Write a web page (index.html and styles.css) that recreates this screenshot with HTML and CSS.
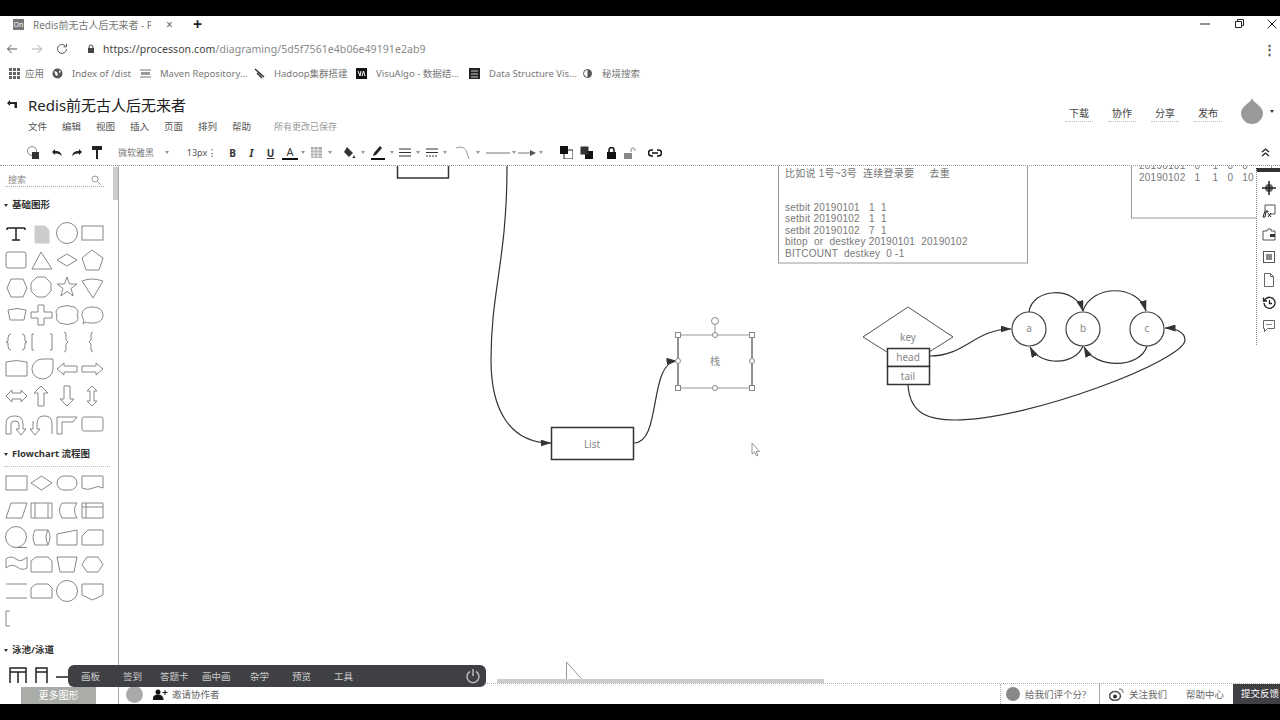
FILE: index.html
```html
<!DOCTYPE html>
<html lang="zh-CN">
<head>
    <meta charset="UTF-8">
    <title>Redis前无古人后无来者 - ProcessOn</title>
    <link rel="stylesheet" href="styles.css">
</head>
<body>
    <div class="black-bar"></div>

    <!-- browser chrome -->
    <div class="tab-row">
        <span class="favicon">On</span>
        <span class="tab-title">Redis前无古人后无来者 - Proc</span>
        <span class="tab-close">×</span>
        <span class="tab-new">+</span>
        <span class="window-btns">
            <svg width="12" height="12" viewBox="0 0 12 12"><path d="M1 6h10" stroke="#222" fill="none"/></svg>
            <svg width="12" height="12" viewBox="0 0 12 12"><path d="M2.5 3.5h6v6h-6zM4.500 3.500V1.500h6v6h-2" stroke="#222" fill="none"/></svg>
            <svg width="12" height="12" viewBox="0 0 12 12"><path d="M1.500 1.500l9 9M10.500 1.500l-9 9" stroke="#222" fill="none"/></svg>
        </span>
    </div>
    <div class="address-row">
        <svg class="nav-icon" width="12" height="12" viewBox="0 0 12 12"><path d="M11 6H1.500M5.500 2L1.500 6l4 4" stroke="#555" fill="none"/></svg>
        <svg class="nav-icon" width="12" height="12" viewBox="0 0 12 12"><path d="M1 6h9.500M6.500 2l4 4-4 4" stroke="#aaa" fill="none"/></svg>
        <svg class="nav-icon" width="12" height="12" viewBox="0 0 12 12"><path d="M10.500 6a4.500 4.500 0 1 1-1.300-3.200M10.500 .8v3h-3" stroke="#555" fill="none"/></svg>
        <svg class="lock" width="8" height="10" viewBox="0 0 8 10"><path d="M2 4V3a2 2 0 0 1 4 0v1" stroke="#444" fill="none"/><rect x="1" y="4" width="6" height="5" fill="#444"/></svg>
        <span class="url"><b>https://processon.com</b>/diagraming/5d5f7561e4b06e49191e2ab9</span>
        <span class="kebab">⋮</span>
    </div>
    <div class="bookmarks">
        <span class="bm apps"><svg width="11" height="11" viewBox="0 0 11 11" fill="#666"><path d="M0 0h3v3H0zM4 0h3v3H4zM8 0h3v3H8zM0 4h3v3H0zM4 4h3v3H4zM8 4h3v3H8zM0 8h3v3H0zM4 8h3v3H4zM8 8h3v3H8z"/></svg>应用</span>
        <span class="bm w-index"><svg width="11" height="11" viewBox="0 0 11 11"><circle cx="5.500" cy="5.500" r="5" fill="#555"/><path d="M2 3l3 1 1 3-2 1zM7 2l2 2-2 1z" fill="#fff"/></svg>Index of /dist</span>
        <span class="bm w-maven"><svg width="11" height="9" viewBox="0 0 11 9"><path d="M0 1h11M0 8h11" stroke="#777"/><path d="M1 3h9v3H1z" fill="#999"/></svg>Maven Repository...</span>
        <span class="bm w-hadoop"><svg width="11" height="11" viewBox="0 0 11 11"><path d="M1 1l9 8M3 5l5 5" stroke="#333" stroke-width="1.500" fill="none"/></svg>Hadoop集群搭建</span>
        <span class="bm w-visu"><svg width="11" height="11" viewBox="0 0 11 11"><rect width="11" height="11" fill="#111"/><path d="M2 3l2 5 1-5M6 8l1.500-5L9 8" stroke="#fff" fill="none"/></svg>VisuAlgo - 数据结...</span>
        <span class="bm w-ds"><svg width="11" height="11" viewBox="0 0 11 11"><rect width="11" height="11" fill="#222"/><path d="M2 3h7M2 6h7M2 9h7" stroke="#ccc"/></svg>Data Structure Vis...</span>
        <span class="bm"><svg width="11" height="11" viewBox="0 0 11 11"><circle cx="5.500" cy="5.500" r="4" fill="none" stroke="#555"/><path d="M5.500 1.500a4 4 0 0 1 0 8z" fill="#555"/></svg>秘境搜索</span>
    </div>

    <!-- app header -->
    <header class="app-header">
        <div class="title-line">
            <svg class="back" width="12" height="10" viewBox="0 0 12 10"><path d="M4 1L1 4l3 3V5h4.500v4H11V3H4z" fill="#222"/></svg>
            <h1>Redis前无古人后无来者</h1>
        </div>
        <div class="menu-line">
            <span>文件</span><span>编辑</span><span>视图</span><span>插入</span><span>页面</span><span>排列</span><span>帮助</span>
            <em>所有更改已保存</em>
        </div>
        <div class="header-actions">
            <span>下载</span><span>协作</span><span>分享</span><span>发布</span>
            <svg class="avatar" width="22" height="26" viewBox="0 0 22 26"><path d="M11 0C12 5 22 8 22 15a11 11 0 0 1-22 0C0 8 10 5 11 0z" fill="#999"/></svg>
            <i class="caret dark"></i>
        </div>
    </header>

    <!-- toolbar -->
    <div class="toolbar">
        <span class="tb"><svg width="16" height="16" viewBox="0 0 16 16"><circle cx="7" cy="6" r="4.500" fill="none" stroke="#888"/><rect x="7" y="7" width="7" height="7" fill="#333"/></svg></span>
        <span class="tb ml4"><svg width="12" height="9" viewBox="0 0 12 9"><path d="M1 4l3-3v2c4 0 6 1 7 5-2-2-4-2.500-7-2.500V7z" fill="#222"/></svg></span>
        <span class="tb"><svg width="12" height="9" viewBox="0 0 12 9"><path d="M11 4L8 1v2C4 3 2 4 1 8c2-2 4-2.500 7-2.500V7z" fill="#222"/></svg></span>
        <span class="tb"><svg width="10" height="13" viewBox="0 0 10 13"><path d="M0 0h10v4H0zM4 4h2v9H4z" fill="#222"/></svg></span>
        <span class="tb font-name">微软雅黑</span>
        <span class="tb-caret w14"><i class="caret"></i></span>
        <span class="tb font-size">13px</span>
        <span class="tb-arrows">⁝</span>
        <span class="tb w19 ml6"><b>B</b></span>
        <span class="tb w19"><b class="it">I</b></span>
        <span class="tb w19 ul">U</span>
        <span class="tb w19 ml1 color-a">A</span>
        <span class="tb-caret narrow"><i class="caret"></i></span>
        <span class="tb"><svg width="11" height="11" viewBox="0 0 11 11"><rect width="11" height="11" fill="#aaa"/><path d="M0 3h11M0 6h11M0 9h11M3 0v11M7 0v11" stroke="#eee"/></svg></span>
        <span class="tb-caret"><i class="caret"></i></span>
        <span class="tb ml5"><svg width="14" height="14" viewBox="0 0 14 14"><path d="M5 1l6 6-4 4-5-5zM12 9l1.500 3h-3z" fill="#333"/></svg></span>
        <span class="tb-caret"><i class="caret"></i></span>
        <span class="tb ml1"><svg width="14" height="15" viewBox="0 0 14 15"><path d="M9 1l2 2-6 7-3 1 1-3z" fill="#222"/><path d="M0 14h14" stroke="#111" stroke-width="2"/></svg></span>
        <span class="tb-caret"><i class="caret"></i></span>
        <span class="tb w18"><svg width="12" height="9" viewBox="0 0 12 9"><path d="M0 1h12M0 4.500h12M0 8h12" stroke="#333"/></svg></span>
        <span class="tb-caret"><i class="caret"></i></span>
        <span class="tb w18 ml1"><svg width="12" height="9" viewBox="0 0 12 9"><path d="M0 1h12M0 4.500h12" stroke="#333"/><path d="M0 8h12" stroke="#333" stroke-dasharray="2 1"/></svg></span>
        <span class="tb-caret"><i class="caret"></i></span>
        <span class="tb ml5"><svg width="16" height="14" viewBox="0 0 16 14"><path d="M0 2c6-2 10 0 11 5l2 6" stroke="#999" fill="none"/></svg></span>
        <span class="tb-caret"><i class="caret"></i></span>
        <span class="tb w24 ml4"><svg width="24" height="4" viewBox="0 0 24 4"><path d="M0 2h24" stroke="#777"/></svg></span>
        <span class="tb-caret"><i class="caret"></i></span>
        <span class="tb w18"><svg width="18" height="6" viewBox="0 0 18 6"><path d="M0 3h13" stroke="#777"/><path d="M12 0l6 3-6 3z" fill="#555"/></svg></span>
        <span class="tb-caret ml1"><i class="caret"></i></span>
        <span class="tb ml11"><svg width="13" height="13" viewBox="0 0 13 13"><rect x="4" y="4" width="9" height="9" fill="#fff" stroke="#222"/><rect width="8" height="8" fill="#111"/></svg></span>
        <span class="tb"><svg width="13" height="13" viewBox="0 0 13 13"><rect x="5" y="5" width="8" height="8" fill="#111"/><rect x=".5" y=".5" width="8" height="8" fill="#333"/></svg></span>
        <span class="tb ml5"><svg width="9" height="12" viewBox="0 0 9 12"><path d="M2 5V3a2.500 2.500 0 0 1 5 0v2" stroke="#111" stroke-width="1.500" fill="none"/><rect y="5" width="9" height="7" fill="#111"/></svg></span>
        <span class="tb w18"><svg width="12" height="12" viewBox="0 0 12 12"><path d="M7 5V3a2 2 0 0 1 4 0v1" stroke="#888" fill="none"/><rect y="6" width="8" height="6" fill="#888"/></svg></span>
        <span class="tb ml6"><svg width="14" height="8" viewBox="0 0 14 8"><path d="M5 1H3.500a3 3 0 0 0 0 6H5M9 1h1.500a3 3 0 0 1 0 6H9M4 4h6" stroke="#111" stroke-width="1.500" fill="none"/></svg></span>
        <span class="tb collapse"><svg width="9" height="9" viewBox="0 0 9 9"><path d="M1 4l3.500-3L8 4M1 8l3.500-3L8 8" stroke="#222" stroke-width="1.300" fill="none"/></svg></span>
    </div>

    <div class="workspace">
        <!-- shape library -->
        <aside class="sidebar">
            <div class="sidebar-scroll"></div>
            <div class="search"><span>搜索</span><svg width="10" height="10" viewBox="0 0 10 10"><circle cx="4" cy="4" r="3" fill="none" stroke="#999"/><path d="M6.500 6.500L9.500 9.500" stroke="#999"/></svg></div>
            <h3 class="group-title"><i class="caret dark"></i>基础图形</h3>
            <svg class="shapes basic" width="104" height="216" viewBox="4 222 104 216">
                <path class="solid" d="M7 228h18M7 228v2M25 228v2M16 228v12M12 240h8"/>
                <path class="light" d="M35 226h10l4 4v13H35z"/>
                <circle cx="67" cy="233" r="10.500"/>
                <rect x="82" y="226" width="21" height="14"/>
                <rect x="6" y="252" width="20" height="16" rx="2"/>
                <path d="M41 252l11 17H32z"/>
                <path d="M57 260l10-6 10 6-10 6z"/>
                <path d="M92 250l11 8-4 12H86l-4-12z"/>
                <path d="M11 279h12l4 9-4 9H11l-4-9z"/>
                <path d="M37 277h8l6 6v8l-6 6h-8l-6-6v-8z"/>
                <path d="M67 277l2.500 7h7.500l-6 4.500 2.200 7.500-6.200-4.500-6.200 4.500 2.200-7.500-6-4.500h7.500z"/>
                <path d="M82 281q10-4 21 0l-10 17z"/>
                <path d="M8 310q9-3 18 0l-2 10H10z"/>
                <path d="M38 305h6v7h8v6h-8v7h-6v-7h-7v-6h7z"/>
                <path d="M60 307q7-3 14 0 6 3 3 8 3 5-3 8-7 3-14 0-5-3-3-8-3-5 3-8z"/>
                <path d="M82 315c0-6 5-8 10-8s11 2 11 8-5 8-11 8c-2 0-4 0-6-1l-3 2 1-4c-1-1-2-3-2-5z"/>
                <path d="M11 334q-3 0-3 4v3l-2 1 2 1v3q0 4 3 4M22 334q3 0 3 4v3l2 1-2 1v3q0 4-3 4"/>
                <path d="M34 334h-2v16h2M50 334h2v16h-2"/>
                <path d="M64 332q2 0 2 3v5l2 2-2 2v5q0 3-2 3"/>
                <path d="M93 332q-2 0-2 3v5l-2 2 2 2v5q0 3 2 3"/>
                <path d="M6 362q10-3 21 0v14H6z"/>
                <path d="M42 359h11v10a10.500 10 0 1 1-11-10z"/>
                <path d="M57 369l7-6v3h13v6H64v3z"/>
                <path d="M103 369l-7-6v3H82v6h14v3z"/>
                <path d="M6 396l6-6v3h9v-3l6 6-6 6v-3h-9v3z"/>
                <path d="M41 386l7 7h-4v13h-6v-13h-4z"/>
                <path d="M67 406l7-7h-4v-13h-6v13h-4z"/>
                <path d="M92 386l5 5h-3v10h3l-5 5-5-5h3v-10h-3z"/>
                <path d="M6 434v-10q0-8 8-8h1q8 0 8 8v5h3l-5 6-5-6h3v-5q0-3-4-3t-4 3v10z"/>
                <path d="M52 434v-10q0-8-7-8h-1q-7 0-7 8v5h3l-5 6-5-6h3v-5q0-3 0-3"/>
                <path d="M57 434v-17h20l-4 5H62v12z"/>
                <rect x="82" y="417" width="21" height="14" rx="2"/>
            </svg>
            <h3 class="group-title flow"><i class="caret dark"></i>Flowchart 流程图</h3>
            <svg class="shapes flow-shapes" width="104" height="160" viewBox="4 474 104 160">
                <rect x="6" y="476" width="21" height="14"/>
                <path d="M31 483l10.500-7 10.500 7-10.500 7z"/>
                <rect x="57" y="476" width="20" height="14" rx="7"/>
                <path d="M82 476h21v12q-5-3-10 0t-11 0z"/>
                <path d="M11 503h16l-5 15H6z"/>
                <path d="M31 503h21v15H31zM35 503v15M48 503v15"/>
                <path d="M77 503H62q-5 7 0 15h15q-5-8 0-15z"/>
                <path d="M82 503h21v15H82zM82 507h21M86 503v15"/>
                <circle cx="16" cy="537" r="10.500"/>
                <path d="M16 547.500h11"/>
                <path d="M35 530h13q4 7 0 15H35q-4-8 0-15zM48 530q-4 7 0 15"/>
                <path d="M57 534l20-4v15H57z"/>
                <path d="M88 530h15v15H82v-9z"/>
                <path d="M6 559q5-4 10 0t11-2v11q-5 3-10-1t-11 1z"/>
                <path d="M36 557h12l4 4v11H31v-11z"/>
                <path d="M57 557h20l-3 15H60z"/>
                <path d="M87 557h11l5 7.500-5 7.500H87l-5-7.500z"/>
                <path d="M6 584h21M6 598h21"/>
                <path d="M36 584h12l4 4v10H31v-10z"/>
                <circle cx="67" cy="591" r="10.500"/>
                <path d="M82 584h21v11l-10.500 5-10.500-5z"/>
                <path d="M10 611H6v15h4"/>
            </svg>
            <h3 class="group-title lane"><i class="caret dark"></i>泳池/泳道</h3>
            <svg class="shapes lanes" width="104" height="22" viewBox="4 666 104 22">
                <path class="solid" d="M10 684v-15h16v15M10 673h16M18 673v11M36 684v-15h11v15M36 673h11M56 678h14"/>
            </svg>
            <div class="more-shapes">更多图形</div>
        </aside>

        <div class="center">
            <main class="canvas">
                <!-- diagram is a free canvas: viewBox keeps page coords -->
                <svg class="diagram" width="1161" height="517" viewBox="119 166 1161 517">
                    <defs>
                        <marker id="head" markerWidth="11" markerHeight="7" refX="10.500" refY="3.500" orient="auto" markerUnits="userSpaceOnUse">
                            <path d="M0 0l11 3.500L0 7z" fill="#333"/>
                        </marker>
                    </defs>
                    <rect class="box" x="397.500" y="150" width="51" height="28"/>
                    <path class="link" d="M507 166C507 260 491 290 491 360C491 410 510 443 551 443" marker-end="url(#head)"/>
                    <rect class="box" x="551.500" y="427.500" width="82" height="32"/>
                    <text class="label" x="592" y="447.500">List</text>
                    <path class="link" d="M634 443C662 443 648 362 677 361" marker-end="url(#head)"/>

                    <path class="edge" d="M678 335v53M752 335v53"/>
                    <path class="sel" d="M678 335h74M678 388h74M715 335v-10"/>
                    <text class="label" x="715" y="365">栈</text>
                    <circle class="handle" cx="715" cy="321" r="3.500"/>
                    <rect class="handle" x="675.500" y="332.500" width="5" height="5"/>
                    <rect class="handle" x="749.500" y="332.500" width="5" height="5"/>
                    <rect class="handle" x="675.500" y="385.500" width="5" height="5"/>
                    <rect class="handle" x="749.500" y="385.500" width="5" height="5"/>
                    <circle class="handle" cx="715" cy="335" r="2.500"/>
                    <circle class="handle" cx="715" cy="388" r="2.500"/>
                    <circle class="handle" cx="678" cy="361" r="2.500"/>
                    <circle class="handle" cx="752" cy="361" r="2.500"/>
                    <path class="pointer" d="M752 443v11l2.500-2 2 4 1.500-.8-2-3.700h3.500z"/>
                    <path class="pointer" d="M566.500 662v18M566.500 662l16 18"/>

                    <rect class="note" x="778.500" y="150" width="249" height="113"/>
                    <g class="note-text">
                        <text x="785" y="177">比如说 1号~3号  连续登录要     去重</text>
                        <text x="785" y="211">setbit 20190101   1  1</text>
                        <text x="785" y="222">setbit 20190102   1  1</text>
                        <text x="785" y="234">setbit 20190102   7  1</text>
                        <text x="785" y="245">bitop  or  destkey 20190101  20190102</text>
                        <text x="785" y="257">BITCOUNT  destkey  0 -1</text>
                    </g>
                    <rect class="note" x="1131.500" y="150" width="140" height="68"/>
                    <g class="note-text">
                        <text x="1139" y="169">20190101   0    1   0   0</text>
                        <text x="1139" y="181">20190102   1    1   0   10</text>
                    </g>

                    <path class="thin" d="M887 352l-24-15 45-30 45 30-24 15"/>
                    <text class="label" x="908" y="341">key</text>
                    <rect class="box" x="887.500" y="348.500" width="42" height="18"/>
                    <rect class="box" x="887.500" y="366.500" width="42" height="18"/>
                    <text class="label" x="908" y="361">head</text>
                    <text class="label" x="908" y="380">tail</text>
                    <circle class="node" cx="1029" cy="329" r="17"/>
                    <circle class="node" cx="1083" cy="329" r="17"/>
                    <circle class="node" cx="1147" cy="329" r="17"/>
                    <text class="label" x="1029" y="332">a</text>
                    <text class="label" x="1083" y="332">b</text>
                    <text class="label" x="1147" y="332">c</text>
                    <path class="link" d="M930 356C965 356 975 329 1011 329" marker-end="url(#head)"/>
                    <path class="link" d="M1029 312C1032 288 1075 285 1083 311" marker-end="url(#head)"/>
                    <path class="link" d="M1083 311C1092 284 1138 284 1146 311" marker-end="url(#head)"/>
                    <path class="link" d="M1083 346C1075 366 1040 366 1030 347" marker-end="url(#head)"/>
                    <path class="link" d="M1147 346C1140 369 1095 369 1084 347" marker-end="url(#head)"/>
                    <path class="link" d="M908 385C910 415 930 420 955 420C1030 420 1185 360 1185 340C1185 332 1175 328 1165 328" marker-end="url(#head)"/>
                </svg>
                <div class="h-scroll"></div>

                <div class="side-panel">
                    <svg width="14" height="14" viewBox="0 0 14 14"><circle cx="7" cy="7" r="4" fill="#666"/><path d="M7 0v14M0 7h14" stroke="#222" stroke-width="1.500"/></svg>
                    <svg width="14" height="14" viewBox="0 0 14 14"><path d="M3 7V1h10v9H8" stroke="#555" fill="none"/><path d="M1 13l2-6h3v1H4l-1 5zM6 9l3 4M9 9l-3 4" stroke="#222" fill="none"/></svg>
                    <svg width="14" height="14" viewBox="0 0 14 14"><path d="M1 4h4l1-2h3v2h4v9H1z" stroke="#555" fill="none"/><path d="M8 7h5v3H8z" fill="#333"/></svg>
                    <svg width="14" height="14" viewBox="0 0 14 14"><rect x="1.500" y="1.500" width="11" height="11" fill="none" stroke="#555"/><path d="M4 4h6v6H4z" fill="#888"/></svg>
                    <svg width="14" height="14" viewBox="0 0 14 14"><path d="M2.500 .5h6l3 3v10h-9zM8.500 .5v3h3" stroke="#666" fill="none"/></svg>
                    <svg width="14" height="14" viewBox="0 0 14 14"><path d="M2 7a5.500 5.500 0 1 0 1.500-4L1.500 5M1.500 1.500V5H5M7.500 4v3.500H10" stroke="#222" stroke-width="1.300" fill="none"/></svg>
                    <svg width="14" height="14" viewBox="0 0 14 14"><path d="M1.500 1.500h11v8h-7l-3 3v-3h-1z" stroke="#666" fill="none"/><path d="M4 5.500h6" stroke="#888"/></svg>
                </div>
            </main>

            <footer class="status-bar">
                <i class="user-dot"></i>
                <svg class="invite-icon" width="15" height="11" viewBox="0 0 15 11"><circle cx="5" cy="3" r="2.500" fill="#111"/><path d="M0 11c0-4 2-5 5-5s5 1 5 5zM12 1v5M9.500 3.500h5" fill="#111" stroke="#111"/></svg>
                <span class="invite">邀请协作者</span>
                <span class="status-right">
                    <span class="rate"><svg width="14" height="14" viewBox="0 0 14 14"><circle cx="7" cy="7" r="7" fill="#888"/></svg>给我们评个分?</span>
                    <span class="follow"><svg width="15" height="13" viewBox="0 0 15 13"><ellipse cx="6" cy="8" rx="5.500" ry="4.500" fill="none" stroke="#555" stroke-width="1.500"/><circle cx="6" cy="8.500" r="2" fill="#333"/><path d="M10 1q4 0 4 4" stroke="#999" stroke-width="1.500" fill="none"/></svg>关注我们</span>
                    <span class="help">帮助中心</span>
                    <span class="feedback">提交反馈</span>
                </span>
            </footer>
        </div>
    </div>

    <div class="black-bar"></div>

    <!-- floating bar over the canvas -->
    <nav class="float-bar">
        <span>画板</span><span>签到</span><span>答题卡</span><span>画中画</span><span>杂学</span><span>预览</span><span>工具</span>
        <svg class="power" width="16" height="16" viewBox="0 0 16 16"><path d="M5 3.500a6 6 0 1 0 6 0M8 1v7" stroke="#bbb" stroke-width="1.500" fill="none"/></svg>
    </nav>
</body>
</html>
```

FILE: styles.css
```css
* {
    box-sizing: border-box;
}

body {
    margin: 0;
    width: 1280px;
    height: 720px;
    overflow: hidden;
    position: relative;
    display: flex;
    flex-direction: column;
    background-color: #fff;
    color: #444;
    font-family: "Noto Sans", "Noto Sans CJK SC", sans-serif;
    font-size: 10px;
}

.black-bar {
    height: 16px;
    flex: none;
    background-color: #000;
}

/* browser chrome */
.tab-row {
    height: 16px;
    flex: none;
    display: flex;
    align-items: center;
    padding-left: 13px;
}

.favicon {
    width: 11px;
    height: 11px;
    background-color: #777;
    color: #fff;
    font-size: 7px;
    line-height: 11px;
    text-align: center;
}

.tab-title {
    margin-left: 9px;
    width: 118px;
    overflow: hidden;
    white-space: nowrap;
    font-size: 10px;
    color: #777;
}

.tab-close {
    margin-left: 15px;
    font-size: 12px;
    color: #666;
}

.tab-new {
    margin-left: 20px;
    font-size: 16px;
    font-weight: bold;
    color: #222;
}

.window-btns {
    margin-left: auto;
    width: 79px;
    margin-right: 2px;
    display: flex;
    justify-content: space-between;
}

.address-row {
    height: 34px;
    flex: none;
    display: flex;
    align-items: center;
    padding-left: 6px;
}

.nav-icon {
    margin-right: 13px;
}

.lock {
    margin-left: 6px;
}

.url {
    margin-left: 8px;
    font-size: 10.500px;
    letter-spacing: .07px;
    color: #888;
}

.url b {
    font-weight: normal;
    color: #444;
}

.kebab {
    margin-left: auto;
    margin-right: 4px;
    font-size: 13px;
    font-weight: bold;
    color: #555;
}

.bookmarks {
    height: 14px;
    margin-bottom: 6px;
    flex: none;
    display: flex;
    align-items: center;
    padding-left: 9px;
    font-size: 9.500px;
    color: #777;
    white-space: nowrap;
}

.bm {
    display: flex;
    align-items: center;
    gap: 9px;
}

.apps { width: 43px; gap: 5px; }
.w-index { width: 88px; }
.w-maven { width: 114px; }
.w-hadoop { width: 102px; }
.w-visu { width: 113px; }
.w-ds { width: 113px; }

/* app header */
.app-header {
    height: 54px;
    flex: none;
    padding: 6px 0 0 6px;
    position: relative;
}

.title-line {
    display: flex;
    align-items: center;
    height: 24px;
}

.title-line h1 {
    margin: 0 0 0 10px;
    font-size: 15px;
    font-weight: normal;
    color: #222;
}

.menu-line {
    margin: 3px 0 0 22px;
    display: flex;
    gap: 14px;
    font-size: 9.500px;
    line-height: 16px;
    color: #555;
}

.menu-line span {
    width: 20px;
}

.menu-line em {
    margin-left: 8px;
    font-style: normal;
    font-size: 9px;
    color: #999;
}

.header-actions {
    position: absolute;
    top: 12px;
    right: 6px;
    display: flex;
    align-items: flex-start;
    font-size: 10px;
    color: #444;
}

.header-actions span {
    width: 28px;
    margin-right: 15px;
    padding-top: 8px;
    padding-bottom: 1px;
    line-height: 14px;
    text-align: center;
    border-bottom: 1px dotted #bbb;
}

.avatar {
    margin-left: 4px;
    margin-right: 7px;
}

.header-actions .caret {
    align-self: center;
}

.caret {
    display: inline-block;
    width: 0;
    height: 0;
    border-left: 2.500px solid transparent;
    border-right: 2.500px solid transparent;
    border-top: 3px solid #999;
}

.caret.dark {
    border-top-color: #333;
}

/* toolbar */
.toolbar {
    height: 26px;
    flex: none;
    display: flex;
    align-items: center;
    padding-left: 23px;
    border-bottom: 1px dotted #999;
    color: #333;
}

.tb {
    width: 20px;
    flex: none;
    display: flex;
    justify-content: center;
    align-items: center;
}

.tb-caret {
    width: 8px;
    flex: none;
    display: flex;
    justify-content: center;
}

.tb-caret.narrow { width: 6px; }

.ml1 { margin-left: 1px; }
.ml4 { margin-left: 4px; }
.ml5 { margin-left: 5px; }
.ml6 { margin-left: 6px; }
.ml11 { margin-left: 11px; }
.w14 { width: 14px; margin-left: 6px; }
.w18 { width: 18px; }
.w19 { width: 19px; }
.w24 { width: 24px; }

.font-name {
    width: 36px;
    margin-left: 11px;
    font-size: 9px;
    color: #777;
}

.font-size {
    margin-left: 13px;
    font-size: 9px;
    color: #555;
}

.tb-arrows {
    width: 10px;
    text-align: center;
    color: #555;
}

.it {
    font-style: italic;
}

.ul {
    font-weight: bold;
    text-decoration: underline;
}

.color-a {
    font-size: 11px;
    border-bottom: 2px solid #111;
    line-height: 13px;
    width: 16px;
    margin: 0 2px;
}

.collapse {
    margin-left: auto;
    margin-right: 5px;
}

/* work area */
.workspace {
    flex: 1;
    min-height: 0;
    display: flex;
}

.sidebar {
    width: 119px;
    flex: none;
    border-right: 1px solid #aaa;
    position: relative;
    overflow: hidden;
}

.sidebar-scroll {
    position: absolute;
    top: 1px;
    right: 0;
    width: 5px;
    height: 33px;
    background-color: #ccc;
}

.search {
    width: 99px;
    height: 14px;
    margin: 7px 0 0 5px;
    padding: 0 3px;
    display: flex;
    justify-content: space-between;
    align-items: center;
    border-bottom: 1px dotted #aaa;
    font-size: 9px;
    color: #888;
}

.group-title {
    display: flex;
    align-items: center;
    gap: 4px;
    margin: 11px 0 0 4px;
    font-size: 9.500px;
    line-height: 14px;
    color: #333;
}

.group-title.flow {
    margin-top: 9px;
    padding-bottom: 5px;
    border-bottom: 1px dotted #bbb;
    width: 106px;
}

.group-title.lane {
    margin-top: 9px;
}

.shapes {
    display: block;
    margin-left: 4px;
    fill: none;
    stroke: #888;
}

.shapes .solid {
    stroke: #222;
    stroke-width: 1.500px;
}

.shapes .light {
    stroke: #ccc;
    fill: #ccc;
}

.basic {
    margin-top: 10px;
}

.flow-shapes {
    margin-top: 7px;
}

.lanes {
    margin-top: 8px;
}

.more-shapes {
    position: absolute;
    left: 21px;
    bottom: 0;
    width: 75px;
    height: 17px;
    background-color: #aaaca8;
    color: #fff;
    font-size: 10px;
    line-height: 17px;
    text-align: center;
}

.center {
    flex: 1;
    min-width: 0;
    display: flex;
    flex-direction: column;
}

.canvas {
    flex: 1;
    min-height: 0;
    position: relative;
    overflow: hidden;
}

.diagram {
    display: block;
    position: absolute;
    top: 0;
    left: 0;
}

.box {
    fill: #fff;
    stroke: #333;
    stroke-width: 1.500px;
}

.thin {
    fill: #fff;
    stroke: #555;
}

.note {
    fill: #fff;
    stroke: #999;
}

.link {
    fill: none;
    stroke: #333;
    stroke-width: 1.200px;
}

.node {
    fill: #fff;
    stroke: #444;
    stroke-width: 1.200px;
}

.edge {
    stroke: #222;
    fill: none;
}

.sel {
    stroke: #999;
    fill: none;
}

.handle {
    fill: #fff;
    stroke: #888;
}

.pointer {
    fill: #fff;
    stroke: #999;
}

.label {
    fill: #888;
    font-size: 10px;
    text-anchor: middle;
}

.note-text text {
    fill: #777;
    font-family: "Liberation Sans", "Noto Sans CJK SC", sans-serif;
    font-size: 10px;
    white-space: pre;
    letter-spacing: .25px;
}

.h-scroll {
    position: absolute;
    left: 378px;
    bottom: 0;
    width: 327px;
    height: 4px;
    background-color: #ccc;
}

.side-panel {
    position: absolute;
    top: 2px;
    right: 0;
    width: 24px;
    height: 177px;
    padding-top: 9px;
    display: flex;
    flex-direction: column;
    align-items: center;
    gap: 9px;
    background-color: #fff;
    border-left: 1px dotted #888;
    border-top: 4px solid #333;
}

.status-bar {
    height: 21px;
    flex: none;
    display: flex;
    align-items: center;
    padding-left: 7px;
    border-top: 1px dotted #aaa;
    font-size: 9.500px;
    color: #666;
}

.user-dot {
    width: 17px;
    height: 17px;
    border-radius: 50%;
    background-color: #aaa;
}

.invite-icon {
    margin-left: 10px;
}

.invite {
    margin-left: 4px;
}

.status-right {
    margin-left: auto;
    height: 100%;
    display: flex;
    align-items: center;
}

.status-right svg {
    margin-right: 5px;
}

.rate,
.follow {
    display: flex;
    align-items: center;
    height: 100%;
}

.rate {
    width: 100px;
    padding-left: 5px;
    border-left: 1px dotted #aaa;
    border-right: 1px solid #aaa;
}

.follow {
    margin-left: 9px;
}

.help {
    margin-left: 19px;
}

.feedback {
    margin-left: 9px;
    width: 47px;
    height: 100%;
    padding-left: 8px;
    line-height: 20px;
    background-color: #3f4044;
    color: #fff;
    white-space: nowrap;
    overflow: hidden;
}

/* floating bar */
.float-bar {
    position: absolute;
    left: 68px;
    top: 665px;
    width: 418px;
    height: 22px;
    padding-left: 13px;
    display: flex;
    align-items: center;
    border-radius: 6px;
    background-color: #3f4044;
    color: #ccc;
    font-size: 9.500px;
}

.float-bar span {
    width: 42px;
}

.float-bar span:nth-child(2) {
    width: 37px;
}

.float-bar span:nth-child(4) {
    width: 48px;
}

.power {
    position: absolute;
    right: 5px;
    top: 3px;
}
```
